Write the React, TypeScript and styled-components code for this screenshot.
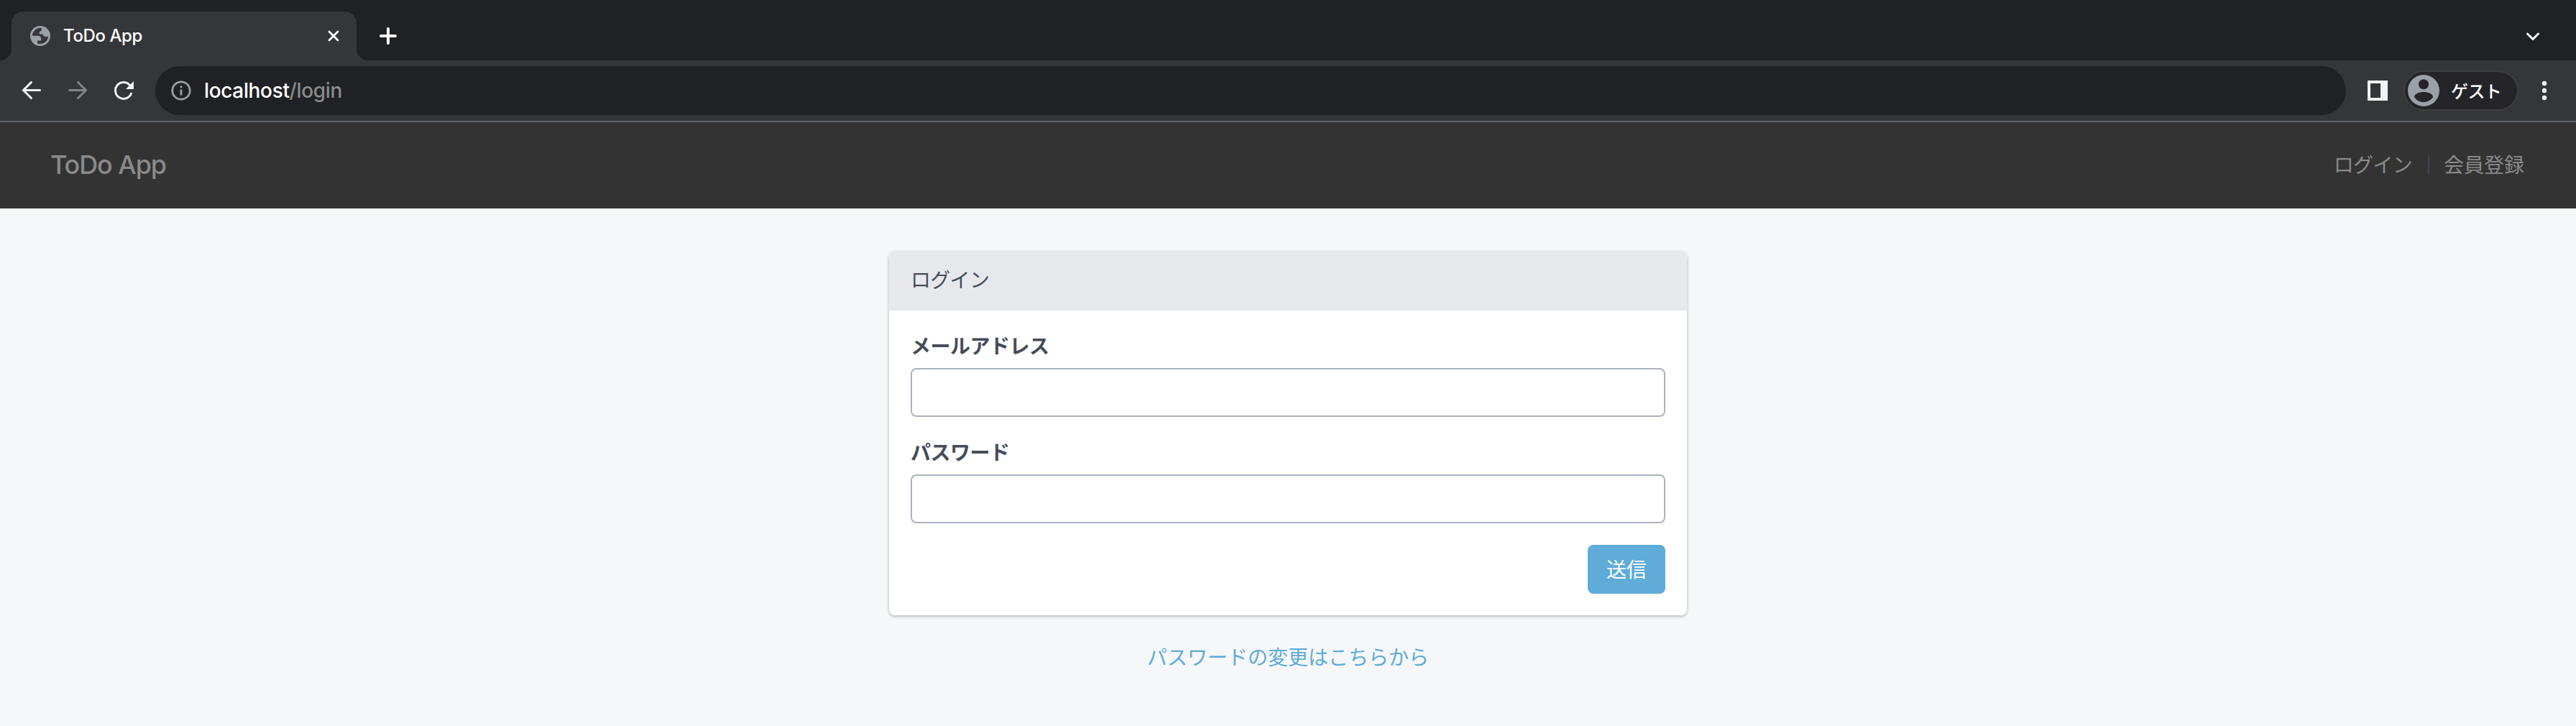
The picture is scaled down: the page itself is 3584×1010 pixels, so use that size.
import React from 'react';
import styled, { createGlobalStyle } from 'styled-components';

const Global = createGlobalStyle`
  * { box-sizing: border-box; }
  body { margin: 0; background: #f6f7f9; font-family: Inter, "Noto Sans CJK JP", sans-serif; }
`;

const Page = styled.div`
  height: 1010px;
  display: flex;
  flex-direction: column;
  background: #f6f7f9;
  overflow: hidden;
`;

const TabStrip = styled.div`
  height: 84px;
  flex: none;
  display: flex;
  align-items: flex-start;
  padding: 16px 50px 0 16px;
  background: #202124;
`;

const Tab = styled.div`
  position: relative;
  width: 480px;
  height: 68px;
  display: flex;
  align-items: center;
  padding: 0 24px 0 26px;
  border-radius: 16px 16px 0 0;
  background: #35363a;
  &::before, &::after {
    content: '';
    position: absolute;
    bottom: 0;
    width: 16px;
    height: 16px;
  }
  &::before { left: -16px; background: radial-gradient(circle at 0 0, #202124 15.5px, #35363a 16.5px); }
  &::after { right: -16px; background: radial-gradient(circle at 100% 0, #202124 15.5px, #35363a 16.5px); }
`;

const TabTitle = styled.span`
  flex: 1;
  margin-left: 18px;
  font: 450 24px/32px Inter, sans-serif;
  letter-spacing: -0.4px;
  color: #fff;
`;

const NewTab = styled.div`
  display: flex;
  margin: 20px 0 0 30px;
`;

const TabSearch = styled.div`
  display: flex;
  margin: 28px 0 0 auto;
`;

const Toolbar = styled.div`
  height: 86px;
  flex: none;
  display: flex;
  align-items: center;
  padding: 0 40px 0 30px;
  background: #35363a;
  border-bottom: 2px solid #5f6368;
`;

const NavIcons = styled.div`
  display: flex;
  gap: 36px;
`;

const AddressBar = styled.div`
  flex: 1;
  height: 68px;
  display: flex;
  align-items: center;
  margin-left: 30px;
  padding-left: 22px;
  border-radius: 34px;
  background: #202124;
`;

const Url = styled.span<{ $dim?: boolean }>`
  font: 450 28px/36px Inter, sans-serif;
  letter-spacing: -0.35px;
  color: ${p => (p.$dim ? '#8a8b8d' : '#fff')};
`;

const UrlText = styled.div`
  margin-left: 18px;
  white-space: nowrap;
`;

const PanelButton = styled.div`
  display: flex;
  margin-left: 30px;
`;

const Profile = styled.div`
  width: 160px;
  height: 56px;
  display: flex;
  align-items: center;
  margin-left: 22px;
  padding-left: 4px;
  border: 2px solid #3e3f43;
  border-radius: 28px;
  background: #242429;
`;

const ProfileName = styled.span`
  margin-left: 16px;
  font: 500 24px/32px "Noto Sans CJK JP", sans-serif;
  letter-spacing: -0.6px;
  color: #fff;
`;

const Menu = styled.div`
  display: flex;
  margin-left: 32px;
`;

const SiteHeader = styled.header`
  height: 120px;
  flex: none;
  display: flex;
  align-items: center;
  justify-content: space-between;
  padding: 0 72px 0 70px;
  background: #333;
  color: #8a8a8a;
`;

const Brand = styled.a`
  padding-bottom: 2px;
  font: 450 36px/48px Inter, sans-serif;
  letter-spacing: -1.1px;
`;

const SiteNav = styled.nav`
  display: flex;
  align-items: center;
  font-size: 28px;
  line-height: 40px;
`;

const NavLink = styled.a<{ $tight?: boolean }>`
  letter-spacing: ${p => (p.$tight ? '-0.7px' : '0')};
`;

const Divider = styled.span`
  width: 2px;
  height: 26px;
  margin: 0 20px 0 22px;
  background: #3d4351;
`;

const Main = styled.main`
  display: flex;
  flex-direction: column;
  align-items: center;
  padding-top: 60px;
`;

const Card = styled.section`
  width: 1110px;
  height: 506px;
  border-radius: 8px;
  overflow: hidden;
  background: #fff;
  color: #454d58;
  box-shadow: 0 2px 4px rgba(0, 0, 0, 0.22), 0 0 4px rgba(0, 0, 0, 0.08);
`;

const CardHeader = styled.h1`
  height: 82px;
  margin: 0;
  padding: 18px 30px;
  font: 400 28px/40px "Noto Sans CJK JP", sans-serif;
  letter-spacing: -0.7px;
  background: #e7e8ec;
`;

const Form = styled.form`
  display: flex;
  flex-direction: column;
  padding: 28px 30px;
`;

const Label = styled.label`
  height: 40px;
  margin-bottom: 12px;
  font: 700 28px/40px "Noto Sans CJK JP", sans-serif;
  letter-spacing: -0.5px;
`;

const Input = styled.input`
  height: 68px;
  margin: 0 0 28px;
  border: 2px solid #acb1c0;
  border-radius: 8px;
  background: #fff;
`;

const Submit = styled.button`
  align-self: flex-end;
  width: 108px;
  height: 68px;
  margin-top: 2px;
  padding: 0 0 3px;
  border: 0;
  border-radius: 8px;
  background: #5eacd7;
  color: #fff;
  font: 400 28px/40px "Noto Sans CJK JP", sans-serif;
`;

const ResetLink = styled.a`
  margin-top: 37px;
  font: 400 28px/40px "Noto Sans CJK JP", sans-serif;
  color: #5eacd7;
`;

const Globe = () => (
  <svg width="28" height="28" viewBox="0 0 28 28">
    <circle cx="14" cy="14" r="14" fill="#9aa0a6" />
    <path
      fill="#35363a"
      d="M16.200 3.300C9.500 2 3.200 7 2.900 13.800H10C13.200 13.800 15.200 15.200 15.200 18V20.500H10.200V24.400C16.500 26.700 24.800 22.500 25.200 14.600C23.800 15.500 21.500 15.300 20.200 14.800C18.500 14.200 17.800 13.200 17.600 11.400H13C12 9 13.500 7.300 15.500 7.100C15.500 5.500 15.700 4.300 16.200 3.300Z"
    />
  </svg>
);

const Stroke = ({ d, w, h, color = '#f1f3f4', t = 3.4 }: { d: string; w: number; h: number; color?: string; t?: number }) => (
  <svg width={w} height={h} viewBox={`0 0 ${w} ${h}`} fill="none" stroke={color} strokeWidth={t} strokeLinecap="round">
    <path d={d} />
  </svg>
);

export default function App() {
  return (
    <Page>
      <Global />
      <TabStrip>
        <Tab>
          <Globe />
          <TabTitle>ToDo App</TabTitle>
          <Stroke w={16} h={16} color="#fff" t={2.8} d="M2 2L14 14M14 2L2 14" />
        </Tab>
        <NewTab><Stroke w={28} h={28} color="#fff" t={4} d="M14 4V24M4 14H24" /></NewTab>
        <TabSearch><Stroke w={20} h={14} color="#fff" t={3} d="M2.500 3L10 10.500L17.500 3" /></TabSearch>
      </TabStrip>
      <Toolbar>
        <NavIcons>
          <Stroke w={28} h={28} t={3} d="M25.500 13.500H3M13.500 2.500L2.500 13.500L13.500 24.500" />
          <Stroke w={28} h={28} t={3} color="#838486" d="M2.500 13.500H25M14.500 2.500L25.500 13.500L14.500 24.500" />
          <svg width="28" height="28" viewBox="0 0 28 28" fill="none" stroke="#f1f3f4" strokeWidth="3" strokeLinecap="round">
            <path d="M24.500 18.200A11.400 11.400 0 1 1 22.300 6.200" />
            <path d="M28 1V12H17Z" fill="#f1f3f4" stroke="none" />
          </svg>
        </NavIcons>
        <AddressBar>
          <svg width="28" height="28" viewBox="0 0 28 28" fill="none" stroke="#9aa0a6" strokeWidth="2.800">
            <circle cx="14" cy="14" r="12.200" />
            <path d="M14 12.500V20.500M14 7.500V10.300" />
          </svg>
          <UrlText><Url>localhost</Url><Url $dim>/login</Url></UrlText>
        </AddressBar>
        <PanelButton>
          <svg width="28" height="28"><path fill="#f1f3f4" fillRule="evenodd" d="M0 0H28V28H0ZM4 4V24H18V4Z" /></svg>
        </PanelButton>
        <Profile>
          <svg width="44" height="44" viewBox="0 0 44 44">
            <circle cx="22" cy="22" r="22" fill="#9aa0a6" />
            <circle cx="22" cy="13.300" r="7" fill="#242429" />
            <path d="M9 31C9 26.500 16 24 22 24S35 26.500 35 31C32 35.500 27.500 38 22 38S12 35.500 9 31Z" fill="#242429" />
          </svg>
          <ProfileName>ゲスト</ProfileName>
        </Profile>
        <Menu>
          <svg width="8" height="28" fill="#f1f3f4">
            <circle cx="4" cy="4" r="3.200" /><circle cx="4" cy="14" r="3.200" /><circle cx="4" cy="24" r="3.200" />
          </svg>
        </Menu>
      </Toolbar>
      <SiteHeader>
        <Brand>ToDo App</Brand>
        <SiteNav><NavLink $tight>ログイン</NavLink><Divider /><NavLink>会員登録</NavLink></SiteNav>
      </SiteHeader>
      <Main>
        <Card>
          <CardHeader>ログイン</CardHeader>
          <Form>
            <Label htmlFor="email">メールアドレス</Label>
            <Input id="email" type="text" />
            <Label htmlFor="password">パスワード</Label>
            <Input id="password" type="password" />
            <Submit type="button">送信</Submit>
          </Form>
        </Card>
        <ResetLink>パスワードの変更はこちらから</ResetLink>
      </Main>
    </Page>
  );
}
